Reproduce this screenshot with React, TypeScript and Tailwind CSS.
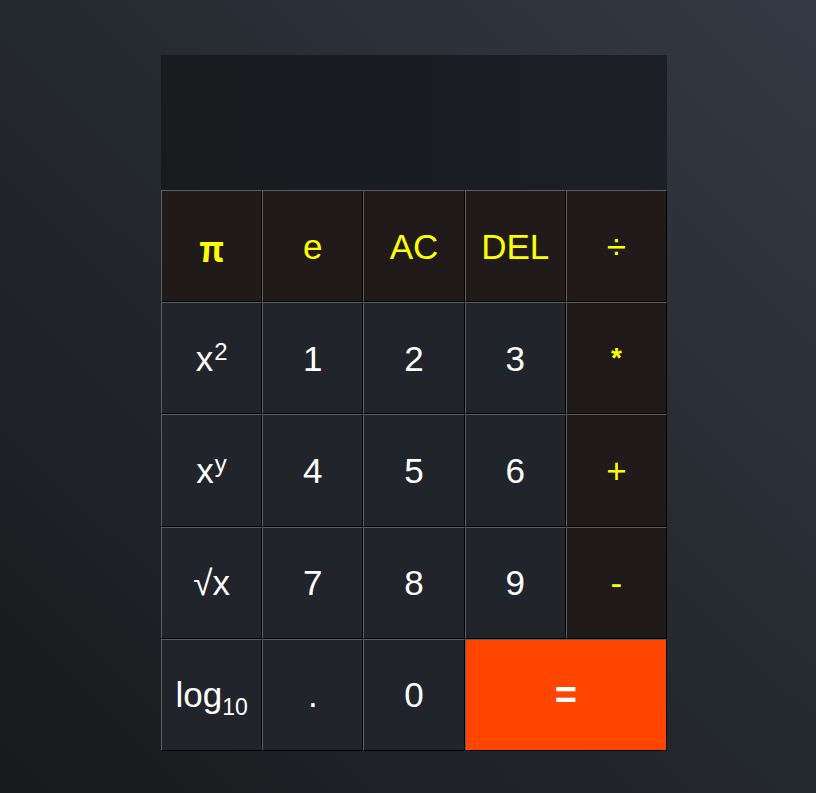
import React from "react";

type Btn = { label: React.ReactNode; kind: "op" | "num" | "eq"; span?: boolean };

const sup = (base: string, s: string) => (
  <span className="inline-flex items-start">
    <span>{base}</span>
    <span className="text-[24px] leading-none relative -top-[1px] ml-[1px]">{s}</span>
  </span>
);

const buttons: Btn[] = [
  {
    label: (
      <span className="font-bold" style={{ fontFamily: '"Noto Sans CJK SC", "Liberation Sans", sans-serif' }}>
        π
      </span>
    ),
    kind: "op",
  },
  { label: "e", kind: "op" },
  { label: "AC", kind: "op" },
  { label: "DEL", kind: "op" },
  { label: "÷", kind: "op" },
  { label: sup("x", "2"), kind: "num" },
  { label: "1", kind: "num" },
  { label: "2", kind: "num" },
  { label: "3", kind: "num" },
  { label: <span className="font-bold text-[28px]">*</span>, kind: "op" },
  { label: sup("x", "y"), kind: "num" },
  { label: "4", kind: "num" },
  { label: "5", kind: "num" },
  { label: "6", kind: "num" },
  { label: "+", kind: "op" },
  { label: "√x", kind: "num" },
  { label: "7", kind: "num" },
  { label: "8", kind: "num" },
  { label: "9", kind: "num" },
  { label: "-", kind: "op" },
  {
    label: (
      <span className="inline-flex items-end">
        <span>log</span>
        <span className="text-[23px] leading-none relative top-[7px]">10</span>
      </span>
    ),
    kind: "num",
  },
  { label: ".", kind: "num" },
  { label: "0", kind: "num" },
  { label: <span className="font-bold text-[38px]">=</span>, kind: "eq", span: true },
];

export default function App() {
  return (
    <div
      className="min-h-screen w-full bg-[linear-gradient(to_top_right,#18191c_0%,#23272d_45%,#333a45_100%)] pt-[55px]"
      style={{ fontFamily: '"Liberation Sans", Arial, sans-serif' }}
    >
      <div className="ml-[161px] w-[506px]">
        <div className="h-[135px] bg-[linear-gradient(to_right,#181a1e,#1c1f24)]" />
        <div className="grid grid-cols-5">
          {buttons.map((b, i) => (
            <button
              key={i}
              className={
                "h-[112.2px] flex items-center justify-center text-[35px] leading-none border-t border-l border-r border-b border-t-[#5e5e5e] border-l-[#5e5e5e] border-r-black border-b-black " +
                (b.span ? "col-span-2 " : "") +
                (b.kind === "op"
                  ? "bg-[#201a1a] text-[#ffff00]"
                  : b.kind === "eq"
                  ? "bg-[#ff4500] text-white"
                  : "bg-[#21252b] text-white")
              }
            >
              {b.label}
            </button>
          ))}
        </div>
      </div>
    </div>
  );
}
